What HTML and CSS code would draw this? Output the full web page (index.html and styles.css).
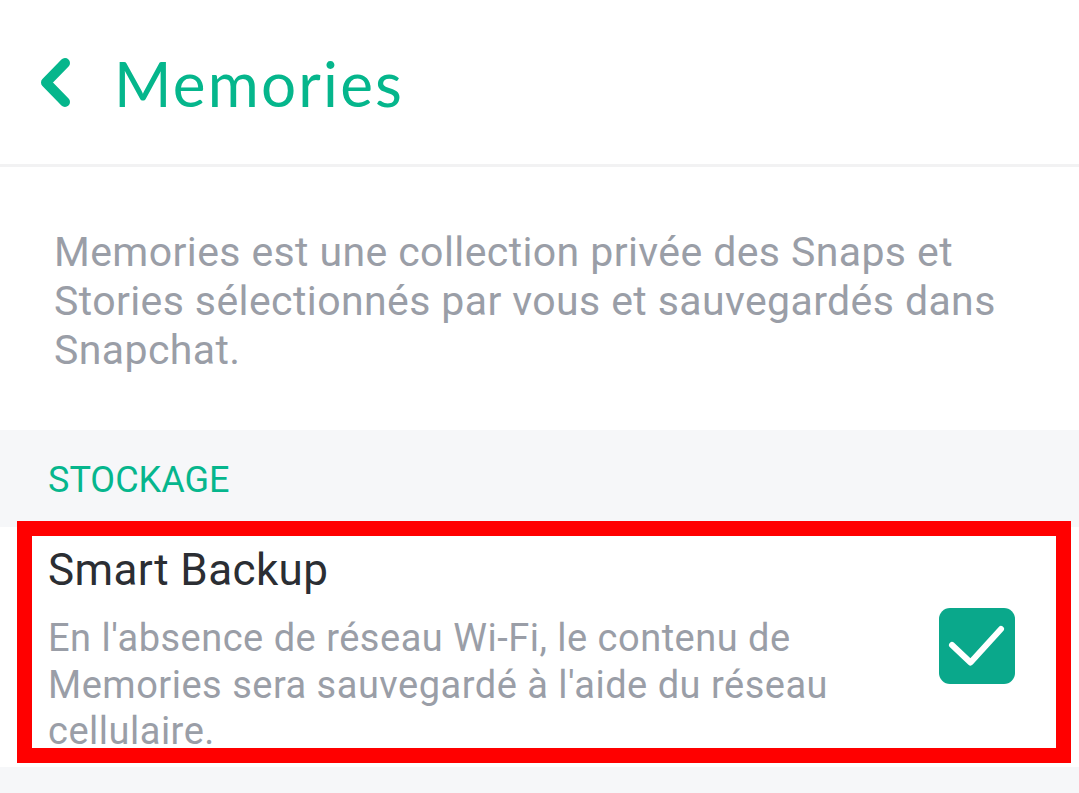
FILE: index.html
```html
<!DOCTYPE html>
<html lang="fr">
<head>
<meta charset="utf-8">
<title>Memories</title>
<link rel="stylesheet" href="styles.css">
</head>
<body>
<header class="topbar">
  <svg class="back" width="40" height="60" viewBox="0 0 40 60" aria-hidden="true">
    <path d="M25 5 L6 24.5 L25 44" fill="none" stroke="#05b68c" stroke-width="10" stroke-linecap="round" stroke-linejoin="round"/>
  </svg>
  <h1 class="title">Memories</h1>
</header>
<section class="intro">
  <p>Memories est une collection privée des Snaps et<br>Stories sélectionnés par vous et sauvegardés dans<br>Snapchat.</p>
</section>
<div class="section-head">STOCKAGE</div>
<div class="row">
  <div class="row-text">
    <div class="row-title">Smart Backup</div>
    <div class="row-desc">En l'absence de réseau Wi-Fi, le contenu de<br>Memories sera sauvegardé à l'aide du réseau<br>cellulaire.</div>
  </div>
  <div class="checkbox">
    <svg width="76" height="76" viewBox="0 0 76 76" aria-hidden="true">
      <path d="M13 37 L31.5 54.5 L62 21" fill="none" stroke="#ffffff" stroke-width="6" stroke-linecap="round" stroke-linejoin="round"/>
    </svg>
  </div>
  <div class="highlight"></div>
</div>
<div class="footer-gap"></div>
</body>
</html>
```
FILE: styles.css
```css
html, body {
  margin: 0;
  padding: 0;
  background: #ffffff;
}
body {
  font-family: Roboto, "Liberation Sans", sans-serif;
  width: 1079px;
  height: 793px;
  overflow: hidden;
}
.topbar {
  height: 164px;
  border-bottom: 3px solid #f2f2f3;
  display: flex;
  align-items: flex-start;
  background: #fff;
}
.back {
  margin-left: 40px;
  margin-top: 58px;
  flex: none;
}
.title {
  margin: 0 0 0 34px;
  padding-top: 46px;
  font-family: Lato, "Noto Sans", sans-serif;
  font-weight: 400;
  font-size: 62px;
  line-height: 74px;
  color: #05b68c;
  letter-spacing: 2.2px;
}
.intro {
  padding: 61px 20px 55px 54px;
  background: #fff;
}
.intro p {
  margin: 0;
  font-size: 41px;
  line-height: 49px;
  letter-spacing: 0.4px;
  color: #9a9ea7;
}
.section-head {
  background: #f6f7f9;
  padding: 29px 48px 26px;
  height: 42px;
  font-size: 36px;
  line-height: 42px;
  color: #06b68d;
}
.row {
  position: relative;
  height: 240px;
  box-sizing: border-box;
  padding: 17px 64px 0 48px;
  display: flex;
  align-items: flex-start;
  justify-content: space-between;
  background: #fff;
}
.row-text {
  flex: 1;
}
.row-title {
  font-size: 44px;
  line-height: 52px;
  letter-spacing: 0.4px;
  color: #2b2e33;
}
.row-desc {
  margin-top: 19px;
  font-size: 38px;
  line-height: 46.5px;
  letter-spacing: 0.5px;
  color: #9a9ea7;
}
.checkbox {
  flex: none;
  width: 76px;
  height: 76px;
  margin-top: 64px;
  border-radius: 11px;
  background: #0aa88b;
}
.checkbox svg {
  display: block;
}
.highlight {
  position: absolute;
  left: 17px;
  right: 8px;
  top: -6px;
  bottom: 4px;
  border: 15px solid #ff0000;
  pointer-events: none;
}
.footer-gap {
  height: 30px;
  background: #f6f7f9;
}
```
